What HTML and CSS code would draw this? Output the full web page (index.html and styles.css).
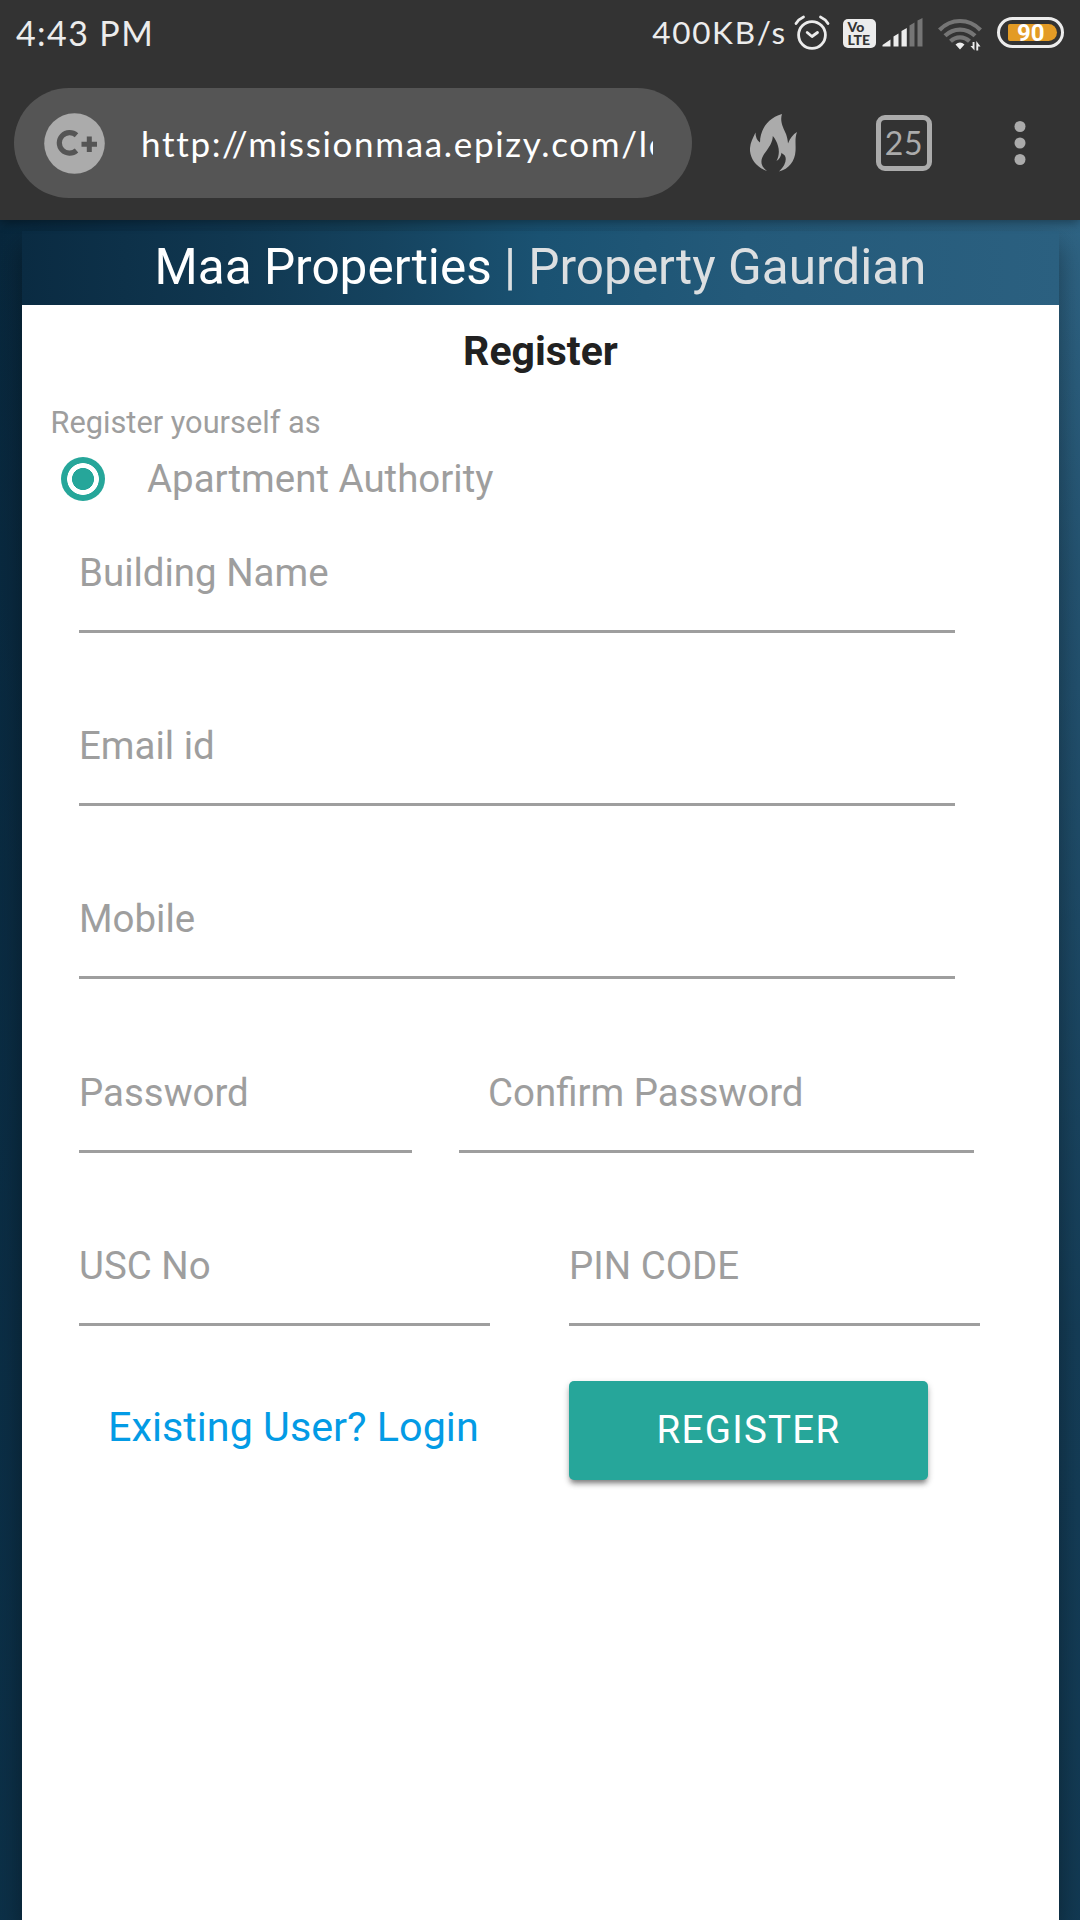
FILE: index.html
```html
<!DOCTYPE html>
<html lang="en">
<head>
<meta charset="utf-8">
<title>Maa Properties | Property Gaurdian</title>
<link rel="stylesheet" href="styles.css">
</head>
<body>
<div class="chrome">
  <div class="status">
    <span class="time">4:43 PM</span>
    <span class="speed">400KB/s</span>
    <svg class="alarm" width="36" height="36" viewBox="0 0 36 36" fill="none" stroke="#ececec" stroke-width="2.8" stroke-linecap="round" stroke-linejoin="round">
      <circle cx="18" cy="20" r="13.4"/>
      <path d="M2 8.5C4 5.5 6 3.5 9.5 2M26.500 2C30 3.500 32 5.500 34 8.500M13.200 17.500L18 21.500L23.500 17.500" />
    </svg>
    <span class="volte"><span>Vo</span><span>LTE</span></span>
    <svg class="signal" width="42" height="30" viewBox="0 0 42 30">
      <path fill="#ececec" d="M.5 28.500V27L8.500 21.500V28.500ZM11.500 18.500L16.500 15.500V28.500H11.500ZM19.500 13L24.800 10V28.500H19.500Z"/>
      <path fill="#757575" d="M27.500 7.500L32.500 4.500V28.500H27.500ZM35.500 2.500L40.500 0V28.500H35.500Z"/>
    </svg>
    <svg class="wifi" width="44" height="36" viewBox="0 0 44 36">
      <g fill="none" stroke="#757575" stroke-width="4.200">
        <path d="M1.500 13C13 1 31 1 42.500 13"/>
        <path d="M7 18.800C15.500 10.500 28.500 10.500 37 18.800"/>
        <path d="M12.500 24.300C18 19 26 19 31.500 24.300"/>
      </g>
      <path fill="#ececec" d="M17.500 27.500Q22 23.500 26.500 27.500L22 32.500ZM32.500 29H34.600V25H36.500V33.500ZM38.300 24L42.500 29.500H40.200V33.500H38.300Z"/>
    </svg>
    <span class="battery"><span class="charge">90</span></span>
  </div>
  <div class="toolbar">
    <div class="address">
      <svg width="61" height="61" viewBox="0 0 61 61">
        <circle cx="30.500" cy="30.500" r="30.300" fill="#ababab"/>
        <path d="M32.500 22.200A10.300 10.300 0 1 0 32.500 37.500" fill="none" stroke="#555" stroke-width="5.200"/>
        <path d="M37.500 31.200H53M45.300 23.500V39" stroke="#555" stroke-width="5"/>
      </svg>
      <div class="url">http://missionmaa.epizy.com/lo</div>
    </div>
    <svg class="flame" width="48" height="58" viewBox="0 0 48 58">
      <path fill="#ababab" d="M32 0C29.500 8 33.500 14 36 20C37 23 37.800 26 38 29.500C40 24 43 20.500 47 18C44.500 25 46 30 45.500 37C45 47 39 55 29 57.500C35 52 37 46 35 42C34.500 40.500 32 40 31.500 38.800C31 42 29.500 45.500 26.500 47C29 42 29.500 37 28 32C27 28 25 24.500 22.800 22C22.500 28 20 32 16 37.500C10 45 9.500 51 17 57C7 53.500 1 46 0 37C-.5 30 2.500 25 5.500 18.500C5.500 23 7 26.500 10 28.500C10 16 17.500 4 32 0Z"/>
    </svg>
    <span class="tabs">25</span>
    <svg class="more" width="12" height="44" viewBox="0 0 12 44" fill="#ababab"><circle cx="6" cy="5.500" r="5.500"/><circle cx="6" cy="22" r="5.500"/><circle cx="6" cy="38.500" r="5.500"/></svg>
  </div>
</div>
<main class="page">
  <div class="card">
    <header class="brand"><h1>Maa Properties <span>| Property Gaurdian</span></h1></header>
    <form class="form">
      <h2>Register</h2>
      <div class="hint">Register yourself as</div>
      <label class="option"><span class="radio"></span><span>Apartment Authority</span></label>
      <div class="row"><div class="field full">Building Name</div></div>
      <div class="row"><div class="field full">Email id</div></div>
      <div class="row"><div class="field full">Mobile</div></div>
      <div class="row"><div class="field pass">Password</div><div class="field confirm">Confirm Password</div></div>
      <div class="row"><div class="field half">USC No</div><div class="field half pin">PIN CODE</div></div>
      <div class="actions"><a class="login">Existing User? Login</a><span class="button">REGISTER</span></div>
    </form>
  </div>
</main>
</body>
</html>
```
FILE: styles.css
```css
* { box-sizing: border-box; }
body { margin: 0; width: 1080px; height: 1920px; overflow: hidden; display: flex; flex-direction: column; font-family: Roboto, sans-serif; color: #212121; background: #0c2c42; }
svg { display: block; flex: none; }

.chrome { position: relative; z-index: 2; flex: none; height: 220px; background: #333; font-family: Lato, sans-serif; box-shadow: 0 2px 10px rgba(0,0,0,.4); }
.status { height: 88px; display: flex; align-items: flex-start; padding: 0 16px; color: #ececec; }
.time { width: 637px; font-size: 34px; line-height: 40px; padding-top: 13px; letter-spacing: 1.400px; }
.speed { width: 142px; font-size: 31.500px; line-height: 40px; padding-top: 12px; letter-spacing: 1.700px; white-space: nowrap; }
.alarm { margin-top: 15px; }
.volte { margin: 19px 0 0 13px; width: 33px; height: 29px; border-radius: 5px; background: #ececec; color: #333; font: 900 14px/12px Lato, sans-serif; display: flex; flex-direction: column; gap: 1px; padding: 2px 0 0 4.500px; flex: none; }
.signal { margin: 18px 0 0 6px; }
.wifi { margin: 17px 0 0 14px; }
.battery { margin: 17px 0 0 15px; width: 67px; height: 31px; border: 3px solid #ececec; border-radius: 16px; padding: 4px 4px 4px 8px; flex: none; }
.charge { display: block; height: 17px; background: #e39b25; border-radius: 2px 9px 9px 2px; font: 700 24px/18px Roboto, sans-serif; color: #fff; padding-left: 9px; }

.toolbar { display: flex; align-items: center; height: 110px; padding-left: 14px; }
.address { width: 678px; height: 110px; border-radius: 55px; background: #555; display: flex; align-items: center; padding-left: 30px; }
.url { width: 512px; margin-left: 36px; overflow: hidden; white-space: nowrap; font-size: 35px; line-height: 50px; letter-spacing: 1.670px; color: #fff; }
.flame { margin-left: 58px; }
.tabs { margin-left: 78px; width: 56px; height: 56px; border: 5.500px solid #ababab; border-radius: 9px; color: #ababab; font-size: 32px; line-height: 45px; text-align: center; letter-spacing: .6px; }
.more { margin-left: 81.500px; }

.page { flex: 1; padding: 11px 21px 0 22px; background: linear-gradient(180deg, rgba(8,40,62,0) 0, rgba(12,46,70,.3) 20%, rgba(12,48,72,.75) 65%, rgba(13,50,74,.85) 100%), linear-gradient(90deg, #08273c 0, #0d314a 14%, #15415a 35%, #1a5272 50%, #245a7a 70%, #2f6484 100%); }
.card { height: 1689px; display: flex; flex-direction: column; box-shadow: 0 14px 25px rgba(0,0,0,.38); }
.brand { height: 74px; background: linear-gradient(90deg, #0a2b42 0, #103750 20%, #15435f 35%, #1a5272 50%, #245a7a 70%, #2b6080 100%); }
h1 { margin: 0; font-weight: 400; font-size: 49.500px; line-height: 72px; text-align: center; color: #fff; white-space: nowrap; }
h1 span { color: #dcdfe1; }

.form { flex: 1; background: #fff; color: #9e9e9e; font-size: 38.450px; }
h2 { margin: 0; padding-top: 22px; font-size: 41px; line-height: 48px; text-align: center; font-weight: 700; color: #212121; }
.hint { margin: 30px 0 0 28.500px; font-size: 30.750px; line-height: 36px; }
.option { display: flex; align-items: center; gap: 42px; height: 46px; margin: 15px 0 0 39px; line-height: 46px; }
.radio { width: 44px; height: 44px; border-radius: 50%; background: radial-gradient(circle, #26a69a 10.700px, #fff 11.300px 15.500px, #26a69a 16.200px); }
.row { display: flex; height: 173.250px; padding-left: 57px; }
.option + .row { margin-top: 31.900px; }
.field { height: 99px; border-bottom: 3px solid #9e9e9e; line-height: 78.600px; white-space: nowrap; }
.full { width: 876px; }
.pass { width: 333px; }
.confirm { margin-left: 47px; width: 515px; padding-left: 29px; }
.half { width: 411px; }
.pin { margin-left: 79px; }
.actions { display: flex; padding-left: 86px; margin-top: -19.100px; }
.login { width: 461px; color: #039be5; font-size: 41.300px; line-height: 92px; }
.button { width: 359px; height: 99px; border-radius: 5px; background: #26a69a; color: #fff; font-size: 38.500px; line-height: 97px; letter-spacing: 1.300px; text-align: center; box-shadow: 0 5px 5px rgba(0,0,0,.14), 0 3px 7px rgba(0,0,0,.2), 0 5px 4px -3px rgba(0,0,0,.3); }
```
